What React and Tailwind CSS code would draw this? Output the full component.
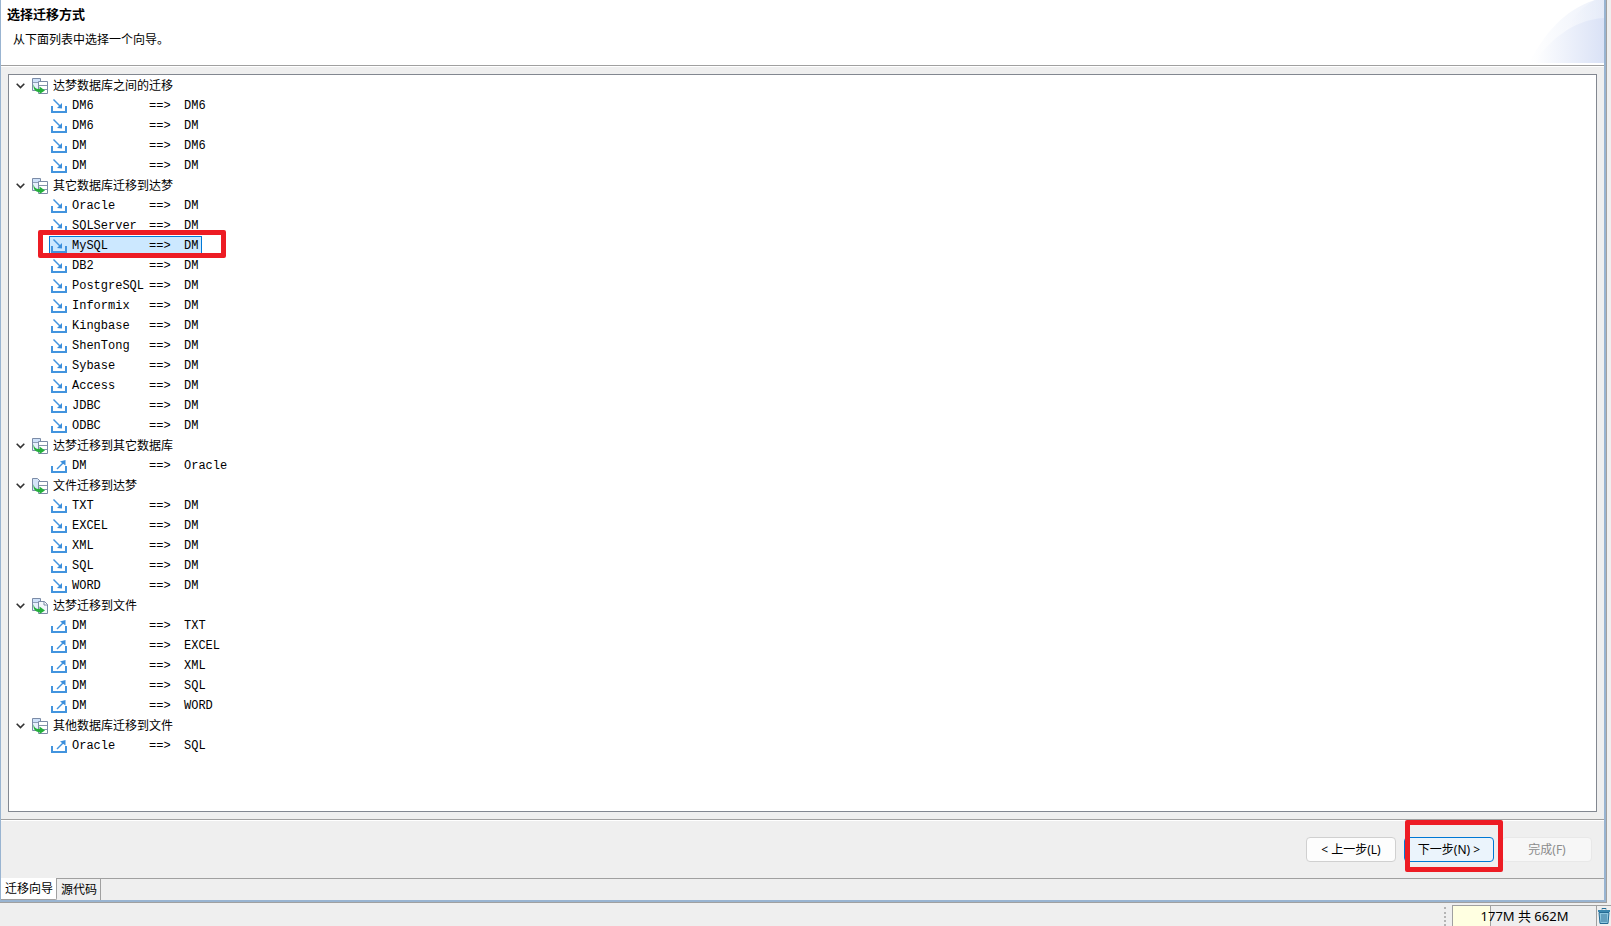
import { useState } from "react";

const groups = [
  {
    title: "达梦数据库之间的迁移",
    icon: "table-table",
    items: [["DM6", "DM6"], ["DM6", "DM"], ["DM", "DM6"], ["DM", "DM"]],
  },
  {
    title: "其它数据库迁移到达梦",
    icon: "table-table",
    items: [
      ["Oracle", "DM"],
      ["SQLServer", "DM"],
      ["MySQL", "DM"],
      ["DB2", "DM"],
      ["PostgreSQL", "DM"],
      ["Informix", "DM"],
      ["Kingbase", "DM"],
      ["ShenTong", "DM"],
      ["Sybase", "DM"],
      ["Access", "DM"],
      ["JDBC", "DM"],
      ["ODBC", "DM"],
    ],
  },
  {
    title: "达梦迁移到其它数据库",
    icon: "table-table",
    out: true,
    items: [["DM", "Oracle"]],
  },
  {
    title: "文件迁移到达梦",
    icon: "file-table",
    items: [["TXT", "DM"], ["EXCEL", "DM"], ["XML", "DM"], ["SQL", "DM"], ["WORD", "DM"]],
  },
  {
    title: "达梦迁移到文件",
    icon: "table-file",
    out: true,
    items: [["DM", "TXT"], ["DM", "EXCEL"], ["DM", "XML"], ["DM", "SQL"], ["DM", "WORD"]],
  },
  {
    title: "其他数据库迁移到文件",
    icon: "table-table",
    out: true,
    items: [["Oracle", "SQL"]],
  },
];

function GroupIcon({ type }) {
  return (
    <svg width="16" height="16" viewBox="0 0 16 16" className="shrink-0" aria-hidden="true">
      {type === "file-table" ? (
        <path d="M.5.5h5l3 3v9h-8z" fill="#d5e5f8" stroke="#7b8ba6" />
      ) : (
        <>
          <path d="M.5.5h8v12h-8z" fill="#e6f0fc" stroke="#7b8ba6" />
          <path d="M1 1h7v3H1z" fill="#cfe2fa" />
          <path d="M1 4.500h7" stroke="#8fa0b8" />
        </>
      )}
      {type === "table-file" ? (
        <path d="M6.500 3.500h6l3 3v9h-9zM12 3.500v3.500h3.500" fill="#f3f7fc" stroke="#7b8ba6" />
      ) : (
        <>
          <path d="M6.500 3.500h9v12h-9z" fill="#fff" stroke="#7b8ba6" />
          <path d="M7 7.500h8M7 11.500h8" stroke="#8796ae" />
        </>
      )}
      <path
        d="M1.500 6C2 9 3.500 11 7.500 11V8.500l5.500 4-5.500 3.500v-2C3.500 14 1 11.500 1.500 6z"
        fill="#25b03c"
      />
    </svg>
  );
}

function ItemIcon({ out }) {
  return (
    <svg width="16" height="16" viewBox="0 0 16 16" className="shrink-0" fill="none" aria-hidden="true">
      <path d="M1 8v6h14V8" stroke="#4294de" strokeWidth="2" />
      {out ? (
        <>
          <path d="M6 11l6.500-6.500" stroke="#4294de" strokeWidth="1.500" />
          <path d="M14.500 2v5.500L9 3.500z" fill="#3b8edb" />
        </>
      ) : (
        <>
          <path d="M2.500 1.500L9 8" stroke="#4294de" strokeWidth="1.500" />
          <path d="M11 10.500V5L6 10z" fill="#3b8edb" />
        </>
      )}
    </svg>
  );
}

function TrashIcon() {
  return (
    <svg width="12" height="16" viewBox="0 0 12 16" aria-hidden="true">
      <path d="M4 1.500V.5h4v1" fill="none" stroke="#256f98" />
      <path d="M0 2h12v2H0z" fill="#3b87ae" />
      <path d="M1 4.500h10l-1 11H2z" fill="#8cc6de" stroke="#246b94" />
      <path d="M4 6v8M6 6v8M8 6v8" stroke="#24658e" strokeWidth=".8" />
    </svg>
  );
}

export default function App() {
  const [selected, setSelected] = useState("1-2");
  const [closed, setClosed] = useState({});

  return (
    <div className="flex h-screen flex-col overflow-hidden bg-[#efefef] font-['Noto_Sans','Noto_Sans_CJK_SC',sans-serif] text-xs text-black">
      <div className="mr-1 flex min-h-0 flex-1 flex-col border-r border-b border-[#a0a0a0]">
        <div className="flex min-h-0 flex-1 flex-col border-r-2 border-b-2 border-l border-[#99b4d1]">
          <header className="flex h-[66px] shrink-0 justify-between border-b border-[#a0a0a0] bg-white">
            <div className="pt-1 pl-1.5">
              <h1 className="text-[13px] leading-5 font-bold">选择迁移方式</h1>
              <p className="pt-1.5 pl-1.5 leading-5">从下面列表中选择一个向导。</p>
            </div>
            <svg width="75" height="63" viewBox="0 0 75 63" aria-hidden="true">
              <defs>
                <linearGradient id="swoosh">
                  <stop offset="0" stopColor="#fff" />
                  <stop offset="1" stopColor="#e0e7f7" />
                </linearGradient>
                <linearGradient id="swooshFront">
                  <stop offset="0" stopColor="#fff" />
                  <stop offset="1" stopColor="#dae2f6" />
                </linearGradient>
              </defs>
              <path d="M0 63C14 36 34 10 66 0h9v63z" fill="url(#swoosh)" opacity=".6" />
              <path d="M24 63C30 34 44 12 66 0h9v63z" fill="url(#swoosh)" opacity=".6" />
              <path d="M4 63C20 42 42 20 75 18v45z" fill="url(#swooshFront)" />
            </svg>
          </header>

          <main className="flex min-h-0 flex-1 border-t border-white p-[7px]">
            <ul className="flex-1 overflow-hidden border border-[#828790] bg-white pt-px">
              {groups.map((group, g) => (
                <li key={group.title}>
                  <button
                    type="button"
                    aria-expanded={!closed[g]}
                    onClick={() => setClosed({ ...closed, [g]: !closed[g] })}
                    className="flex h-5 items-center pl-[7px]"
                  >
                    <svg width="9" height="6" viewBox="0 0 9 6" fill="none" aria-hidden="true">
                      <path d="M.7.8l3.800 3.800L8.300.8" stroke="#333" strokeWidth="1.600" />
                    </svg>
                    <span className="ml-[7px] flex items-center gap-[5px]">
                      <GroupIcon type={group.icon} />
                      {group.title}
                    </span>
                  </button>
                  {!closed[g] && (
                    <ul>
                      {group.items.map(([from, to], i) => {
                        const id = `${g}-${i}`;
                        const active = id === selected;
                        return (
                          <li key={id} className="flex h-5 pl-10">
                            <div className="relative flex">
                              <button
                                type="button"
                                aria-pressed={active}
                                onClick={() => setSelected(id)}
                                className={`flex items-center gap-[5px] border pr-[3px] pl-px font-['Liberation_Mono',monospace] ${
                                  active ? "border-[#0078d7] bg-[#cce8ff]" : "border-transparent"
                                }`}
                              >
                                <ItemIcon out={group.out} />
                                <span className="grid grid-cols-[77px_35px_auto] text-left leading-4">
                                  <span>{from}</span>
                                  <span>==&gt;</span>
                                  <span>{to}</span>
                                </span>
                              </button>
                              {id === "1-2" && (
                                <span className="pointer-events-none absolute -top-1.5 -right-6 -bottom-0.5 -left-[11px] z-10 rounded-xs border-5 border-[#ed1c24]" />
                              )}
                            </div>
                          </li>
                        );
                      })}
                    </ul>
                  )}
                </li>
              ))}
            </ul>
          </main>

          <footer className="flex h-[59px] shrink-0 items-start justify-end gap-2 border-t border-[#a0a0a0] pt-[17px] pr-3 shadow-[inset_0_1px_white]">
            <button type="button" className="h-[25px] w-[90px] rounded border border-[#d0d0d0] bg-[#fdfdfd]">
              &lt; 上一步(L)
            </button>
            <div className="relative">
              <button type="button" className="h-[25px] w-[90px] rounded border border-[#0078d4] bg-[#ebf4fc]">
                下一步(N) &gt;
              </button>
              <span className="pointer-events-none absolute -top-[17px] -right-[9px] -bottom-[10px] left-px z-10 rounded-xs border-5 border-[#ed1c24]" />
            </div>
            <button type="button" disabled className="h-[25px] w-[90px] rounded border border-[#e8e8e8] bg-[#f7f7f7] text-[#8c8c8c]">
              完成(F)
            </button>
          </footer>

          <nav className="flex h-[22px] shrink-0">
            <button type="button" className="rounded-br-xs border-r border-b border-[#a0a0a0] bg-white pr-[3px] pl-1">
              迁移向导
            </button>
            <button type="button" className="border-t border-r border-[#a0a0a0] pr-[3px] pl-1">
              源代码
            </button>
            <span className="flex-1 border-t border-[#a0a0a0]" />
          </nav>
        </div>
      </div>

      <div className="flex h-[23px] shrink-0 justify-end pt-0.5">
        <span className="mr-1.5 mt-0.5 w-0.5 border-l-2 border-dotted border-[#b4b4b4]" />
        <div className="flex w-36 border-t border-l border-[#a0a0a0]">
          <div className="grid flex-1 grid-cols-[38px_1fr]">
            <span className="col-start-1 row-start-1 border-r border-[#a0a0a0] bg-[#ffffe1]" />
            <span className="col-span-2 col-start-1 row-start-1 text-center text-[13px] leading-5">
              177M 共 662M
            </span>
          </div>
        </div>
        <button type="button" aria-label="GC" className="flex w-[15px] items-start border-t border-l border-[#a0a0a0] pt-0.5 pl-px">
          <TrashIcon />
        </button>
      </div>
    </div>
  );
}
